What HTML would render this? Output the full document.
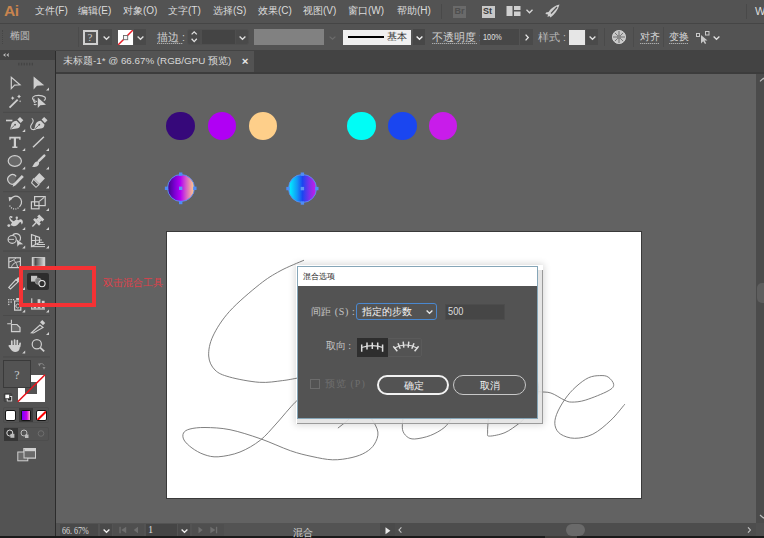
<!DOCTYPE html>
<html><head><meta charset="utf-8">
<style>
*{box-sizing:border-box;margin:0;padding:0}
html,body{width:764px;height:538px;overflow:hidden;background:#535353}
body{position:relative;font-family:"Liberation Sans",sans-serif;color:#d4d4d4;font-size:11px}
.a{position:absolute}
.t{position:absolute;white-space:nowrap;line-height:1}
svg{position:absolute;overflow:visible}
</style></head><body>
<!-- MENU BAR -->
<div class="a" style="left:0;top:0;width:764px;height:23px;background:#535353"></div>
<div class="a" style="left:0;top:22.8px;width:764px;height:1.5px;background:#454545"></div>
<div class="t" style="left:4px;top:2.8px;font-size:15.5px;font-weight:bold;color:#c8844e;letter-spacing:-0.4px">Ai</div>
<div class="t" id="menu" style="left:35px;top:6px;font-size:10px;color:#dcdcdc">
<span class="t" style="left:0">文件(F)</span>
<span class="t" style="left:43px">编辑(E)</span>
<span class="t" style="left:88px">对象(O)</span>
<span class="t" style="left:133px">文字(T)</span>
<span class="t" style="left:178px">选择(S)</span>
<span class="t" style="left:223px">效果(C)</span>
<span class="t" style="left:268px">视图(V)</span>
<span class="t" style="left:313px">窗口(W)</span>
<span class="t" style="left:362px">帮助(H)</span>
</div>
<div class="a" style="left:440.5px;top:4px;width:1px;height:15px;background:#494949"></div>
<div class="a" style="left:453px;top:5.5px;width:13px;height:12px;background:#6a6a6a"></div>
<div class="t" style="left:454.5px;top:7px;font-size:9px;font-weight:bold;color:#4e4e4e">Br</div>
<div class="a" style="left:481.5px;top:5.5px;width:13px;height:12px;background:#c8c8c8"></div>
<div class="t" style="left:483px;top:7px;font-size:9px;font-weight:bold;color:#3a3a3a">St</div>
<svg style="left:506px;top:6px" width="15" height="10"><rect x="0.5" y="0" width="6" height="10" fill="#d0d0d0"/><rect x="8" y="0" width="6.5" height="4" fill="#d0d0d0"/><rect x="8" y="5.5" width="6.5" height="4.5" fill="#d0d0d0"/></svg>
<svg style="left:526px;top:9px" width="7" height="5"><polyline points="0.5,0.8 3.5,3.8 6.5,0.8" fill="none" stroke="#d8d8d8" stroke-width="1.3"/></svg>
<svg style="left:545px;top:4px" width="15" height="14"><path d="M14.5 0.5 C10 1.5 6 4 3.5 8 L1 8.5 L0.5 10 L3 10.5 L2.5 13 L4.5 12 L5.5 13.5 C9.5 10.5 13 6 14.5 0.5 Z" fill="#cfcfcf"/><path d="M6 9.5 L12 3" stroke="#535353" stroke-width="1.2"/></svg>
<div class="a" style="left:745.5px;top:4px;width:1px;height:15px;background:#494949"></div>
<div class="t" style="left:755px;top:6px;font-size:11px;color:#dcdcdc">W</div>

<!-- CONTROL BAR -->
<div class="a" style="left:0;top:24px;width:764px;height:26px;background:#535353"></div>
<div class="a" style="left:0;top:50px;width:764px;height:1px;background:#474747"></div>
<div class="a" style="left:2px;top:30px;width:1px;height:14px;border-left:1px dotted #464646"></div>
<div class="t" style="left:10px;top:31px;font-size:9.5px;color:#bdbdbd">椭圆</div>
<div class="a" style="left:78px;top:27px;width:1.2px;height:19.7px;background:#4b4b4b"></div>
<!-- fill swatch -->
<div class="a" style="left:83px;top:30px;width:15px;height:15px;border:2px solid #d0d0d0;background:#535353"></div>
<div class="t" style="left:87.6px;top:32px;font-size:11px;color:#c8c8c8;font-family:'Liberation Serif',serif">?</div>
<div class="a" style="left:99px;top:29px;width:13px;height:16px;background:#4a4a4a"></div>
<!-- stroke swatch -->
<div class="a" style="left:118px;top:30px;width:15px;height:15px;background:#fff;overflow:hidden">
 <svg width="15" height="15" style="left:0;top:0"><line x1="0" y1="15" x2="15" y2="0" stroke="#e8202a" stroke-width="1.5"/><rect x="5.5" y="5.5" width="4.2" height="4.2" fill="#f4f4f4" stroke="#6a6a6a" stroke-width="0.9"/></svg>
</div>
<div class="a" style="left:133.5px;top:29px;width:12.5px;height:16px;background:#4a4a4a"></div>
<div class="t" style="left:157px;top:32px;font-size:10.5px;color:#d0d0d0">描边 :</div>
<div class="a" style="left:157px;top:42.6px;width:25.5px;height:1px;background:repeating-linear-gradient(90deg,rgba(200,200,200,0.75) 0 1px,rgba(200,200,200,0.25) 1px 2px)"></div>
<div class="a" style="left:186.7px;top:28.8px;width:62.8px;height:16.4px;background:#4a4a4a;border:1px solid #4f4f4f;border-radius:3px"></div>
<div class="a" style="left:201.8px;top:29.8px;width:33px;height:14.4px;background:#444444"></div>
<div class="a" style="left:200.4px;top:29.8px;width:1.4px;height:14.4px;background:#4e4e4e"></div>
<div class="a" style="left:234.8px;top:29.8px;width:1.4px;height:14.4px;background:#4e4e4e"></div>
<!-- profile swatch -->
<div class="a" style="left:254px;top:29px;width:70px;height:16px;background:#818181"></div>
<!-- brush -->
<div class="a" style="left:343px;top:29.5px;width:68px;height:15.5px;background:#f0f0f0"></div>
<div class="a" style="left:347.5px;top:36px;width:36.5px;height:2px;background:#000"></div>
<div class="t" style="left:387px;top:32px;font-size:10px;color:#333">基本</div>
<div class="a" style="left:412.5px;top:29px;width:12px;height:16px;background:#474747"></div>
<!-- opacity -->
<div class="t" style="left:432px;top:32px;font-size:10.5px;color:#d0d0d0">不透明度 :</div>
<div class="a" style="left:432px;top:42.6px;width:44.5px;height:1px;background:repeating-linear-gradient(90deg,rgba(200,200,200,0.75) 0 1px,rgba(200,200,200,0.25) 1px 2px)"></div>
<div class="a" style="left:480px;top:29px;width:39px;height:16px;background:#474747"></div>
<div class="t" style="left:482.7px;top:32.2px;font-size:9.5px;color:#e0e0e0;transform:scaleX(0.77);transform-origin:0 0">100%</div>
<div class="a" style="left:520px;top:29px;width:13px;height:16px;background:#4a4a4a"></div>
<div class="t" style="left:538px;top:32px;font-size:10.5px;color:#bcbcbc">样式 :</div>
<div class="a" style="left:569px;top:29.5px;width:15.5px;height:15.5px;background:#e6e6e6"></div>
<div class="a" style="left:586px;top:29px;width:12px;height:16px;background:#4a4a4a"></div>
<div class="a" style="left:603.5px;top:27.5px;width:1.2px;height:18px;background:#4a4a4a"></div>
<div class="a" style="left:633px;top:27px;width:1.2px;height:19.7px;background:#4b4b4b"></div>
<div class="t" style="left:639.5px;top:32.3px;font-size:9.5px;color:#d8d8d8">对齐</div>
<div class="a" style="left:639.5px;top:42.6px;width:19px;height:1px;background:repeating-linear-gradient(90deg,rgba(200,200,200,0.75) 0 1px,rgba(200,200,200,0.25) 1px 2px)"></div>
<div class="a" style="left:663px;top:27px;width:1.2px;height:19.7px;background:#4b4b4b"></div>
<!-- chevrons -->
<svg style="left:103px;top:35.5px" width="7" height="4"><polyline points="0.6,0.6 3.5,3.3 6.4,0.6" fill="none" stroke="#e0e0e0" stroke-width="1.3"/></svg>
<svg style="left:137px;top:35.5px" width="7" height="4"><polyline points="0.6,0.6 3.5,3.3 6.4,0.6" fill="none" stroke="#e0e0e0" stroke-width="1.3"/></svg>
<svg style="left:239px;top:35.5px" width="7" height="4"><polyline points="0.6,0.6 3.5,3.3 6.4,0.6" fill="none" stroke="#e0e0e0" stroke-width="1.3"/></svg>
<svg style="left:329px;top:35.5px" width="7" height="4"><polyline points="0.6,0.6 3.5,3.3 6.4,0.6" fill="none" stroke="#6c6c6c" stroke-width="1.2"/></svg>
<svg style="left:415.5px;top:35.5px" width="7" height="4"><polyline points="0.6,0.6 3.5,3.3 6.4,0.6" fill="none" stroke="#f0f0f0" stroke-width="1.4"/></svg>
<svg style="left:589px;top:35.5px" width="7" height="4"><polyline points="0.6,0.6 3.5,3.3 6.4,0.6" fill="none" stroke="#e0e0e0" stroke-width="1.3"/></svg>
<svg style="left:713px;top:35.5px" width="7" height="4"><polyline points="0.6,0.6 3.5,3.3 6.4,0.6" fill="none" stroke="#e0e0e0" stroke-width="1.3"/></svg>
<svg style="left:525px;top:33.5px" width="4" height="7"><polyline points="0.6,0.6 3.3,3.5 0.6,6.4" fill="none" stroke="#e8e8e8" stroke-width="1.3"/></svg>
<svg style="left:190.8px;top:31.3px" width="7" height="12"><polyline points="0.6,3.4 3.2,0.8 5.8,3.4" fill="none" stroke="#e0e0e0" stroke-width="1.3"/><polyline points="0.6,7.8 3.2,10.6 5.8,7.8" fill="none" stroke="#e0e0e0" stroke-width="1.3"/></svg>
<!-- recolor globe -->
<svg style="left:611.5px;top:30px" width="14" height="14"><circle cx="7" cy="7" r="6.6" fill="#c8c8c8"/><g stroke="#6a6a6a" stroke-width="0.9"><line x1="7" y1="0.5" x2="7" y2="13.5"/><line x1="0.5" y1="7" x2="13.5" y2="7"/><line x1="2.4" y1="2.4" x2="11.6" y2="11.6"/><line x1="11.6" y1="2.4" x2="2.4" y2="11.6"/></g><circle cx="7" cy="7" r="2.2" fill="#8a8a8a"/><circle cx="7" cy="7" r="6.6" fill="none" stroke="#dcdcdc" stroke-width="0.8"/></svg>
<!-- artboard select icon -->
<svg style="left:696px;top:31px" width="14" height="13"><rect x="0.5" y="2.5" width="3" height="3" fill="none" stroke="#c8c8c8" stroke-width="1"/><rect x="9.5" y="0.5" width="3.5" height="3.5" fill="none" stroke="#c8c8c8" stroke-width="1"/><path d="M5 4 L5 12.5 L7.2 10.3 L9 13 L10.2 12.3 L8.6 9.6 L11.5 9.5 Z" fill="#c8c8c8"/></svg>
<div class="t" style="left:669.3px;top:32.3px;font-size:9.5px;color:#d8d8d8">变换</div>
<div class="a" style="left:669.3px;top:42.6px;width:19px;height:1px;background:repeating-linear-gradient(90deg,rgba(200,200,200,0.75) 0 1px,rgba(200,200,200,0.25) 1px 2px)"></div>

<!-- TOOL PANEL -->
<div class="a" style="left:0;top:50.2px;width:55px;height:9.6px;background:#434343"></div>
<div class="a" style="left:0;top:60px;width:55px;height:476px;background:#535353"></div>
<div class="a" style="left:54.5px;top:51px;width:1.5px;height:485px;background:#2c2c2c"></div>
<svg style="left:0;top:0" width="56" height="538">
<g fill="#cfcfcf" stroke="none">
 <path d="M3 55 L5.8 53 L5.2 55 L5.8 57 Z M6.3 55 L9.1 53 L8.5 55 L9.1 57 Z" fill="#bcbcbc"/>
</g>
<g fill="#444"><rect x="18.2" y="62.8" width="1.3" height="2.6"/><rect x="20.9" y="62.8" width="1.3" height="2.6"/><rect x="23.6" y="62.8" width="1.3" height="2.6"/><rect x="26.3" y="62.8" width="1.3" height="2.6"/><rect x="29" y="62.8" width="1.3" height="2.6"/><rect x="31.7" y="62.8" width="1.3" height="2.6"/></g>
<!-- separators -->
<g fill="#4a4a4a"><rect x="3" y="111.8" width="47" height="1"/><rect x="3" y="191.2" width="47" height="1"/><rect x="3" y="250.6" width="47" height="1"/><rect x="3" y="315" width="47" height="1"/><rect x="3" y="356.4" width="47" height="1"/></g>
<!-- corner triangles -->
<g fill="#cfcfcf">
 <path d="M49 87.5 L49 90.5 L46 90.5 Z"/>
 <path d="M25.2 129 L25.2 132 L22.2 132 Z"/>
 <path d="M25.2 148 L25.2 151 L22.2 151 Z"/><path d="M49 148 L49 151 L46 151 Z"/>
 <path d="M25.2 166.5 L25.2 169.5 L22.2 169.5 Z"/><path d="M49 166.5 L49 169.5 L46 169.5 Z"/>
 <path d="M25.2 185.5 L25.2 188.5 L22.2 188.5 Z"/><path d="M49 185.5 L49 188.5 L46 188.5 Z"/>
 <path d="M25.2 208 L25.2 211 L22.2 211 Z"/><path d="M49 208 L49 211 L46 211 Z"/>
 <path d="M25.2 227 L25.2 230 L22.2 230 Z"/><path d="M49 227 L49 230 L46 230 Z"/>
 <path d="M25.2 245.5 L25.2 248.5 L22.2 248.5 Z"/><path d="M49 245.5 L49 248.5 L46 248.5 Z"/>
 <path d="M25 287 L25 290 L22 290 Z"/>
 <path d="M25.2 309.5 L25.2 312.5 L22.2 312.5 Z"/><path d="M49 309.5 L49 312.5 L46 312.5 Z"/>
 <path d="M49 332 L49 335 L46 335 Z"/>
 <path d="M25.2 350.5 L25.2 353.5 L22.2 353.5 Z"/>
</g>
<g fill="none" stroke="#cfcfcf" stroke-width="1.2" stroke-linejoin="miter">
 <!-- direct select hollow -->
 <path d="M11.3 77.2 L11.3 88.6 L14.6 85.2 L20 84.8 Z"/>
 <!-- line -->
 <path d="M33 147.3 L43.9 136.8" stroke-width="1.5"/>
 <!-- ellipse -->
 <ellipse cx="14.8" cy="161" rx="6.6" ry="5.4" fill="#686868"/>
 <!-- shaper circle -->
 <path d="M14.5 183.8 A4.8 4.8 0 1 1 16.2 176.3" fill="#686868"/>
 <!-- rotate -->
 <path d="M10.6 199.4 A5.8 5.8 0 1 1 20 206"/>
 <path d="M20 206 A5.8 5.8 0 0 1 9.3 204.6" stroke-dasharray="1.1 1.2"/>
 <!-- scale -->
 <rect x="34.6" y="196.6" width="10.6" height="9"/>
 <rect x="31.4" y="201.8" width="7.6" height="7"/>
 <path d="M39.3 201.4 L44.2 197.4"/>
 <!-- shape builder -->
 <ellipse cx="12.2" cy="239.4" rx="4.1" ry="3.9"/>
 <path d="M12.6 235.4 A4.2 4.2 0 1 1 19.6 240.8"/>
 <path d="M8.6 239.4 L14 239.4" stroke-width="0.9"/>
 <!-- perspective -->
 <path d="M31.5 234.5 L31.5 246.5 L39.5 242.5 L39.5 237.5 Z M31.5 240.5 L39.5 240 M35.5 236 L35.5 244.5"/>
 <path d="M39.5 240 L42 240 M39.5 242.4 L43.5 242.4 M37 244.5 L45 244.5 M31.5 246.6 L45 246.6" stroke-width="1"/>
 <!-- mesh -->
 <rect x="8.8" y="257.8" width="11.6" height="9.8"/>
 <path d="M9 262 C12 261 14 260 16 257.8 M11.5 267.5 C12 264 15 262 20.2 261.5 M14 260 C15 262 17 263 17.5 267.5" stroke-width="1"/>
 <!-- gradient -->
 <!-- artboard -->
 <path d="M7.2 323.8 L11 323.8 M11.4 319.8 L11.4 323.8" stroke-width="1.1"/>
 <path d="M11.5 324.5 L17 324.5 L20 327.5 L20 331.6 L11.5 331.6 Z" fill="#6a6a6a"/>
 <!-- zoom -->
 <circle cx="36.8" cy="344.2" r="4.6"/>
 <path d="M40.2 347.6 L44.2 351.4" stroke-width="1.8"/>
 <!-- knife -->
 <path d="M31.5 332.8 L40 325 L43 327.5 L33.5 333 Z"/>
 <!-- eyedropper -->
 <path d="M8.8 287.4 L16 279.5 L18.3 281.6 L10.5 289 Z"/>
 <!-- sprayer doc -->
 <path d="M14.6 301 L20.8 301 L20.8 310.2 L14.6 310.2 Z"/>
 <path d="M19.2 304.5 A2 2 0 1 0 19.2 307.5" stroke-width="1"/>
 <!-- blend circle -->
 <circle cx="42" cy="283.6" r="3.1" stroke="#e0e0e0" fill="#2d2d2d"/>
</g>
<g fill="#cfcfcf" stroke="none">
 <!-- filled arrow -->
 <path d="M33.6 76.4 L33.6 89.4 L37 85.8 L44.2 85.2 Z"/>
 <!-- magic wand -->
 <path d="M8.9 106.9 L17 99 L18.3 100.3 L10.2 108.2 Z"/>
 <path d="M12.6 96.2 L13.4 97.4 L14.6 98.1 L13.4 98.8 L12.6 100 L11.9 98.8 L10.7 98.1 L11.9 97.4 Z"/>
 <path d="M19 94.6 L19.8 95.8 L21 96.5 L19.8 97.2 L19 98.4 L18.3 97.2 L17.1 96.5 L18.3 95.8 Z"/>
 <path d="M20.1 100.3 L20.9 101.3 L20.1 102.3 L19.3 101.3 Z"/>
 <!-- lasso arrow -->
 <path d="M37.8 97.5 L37.8 108 L40.3 105.2 L46 104.8 Z"/>
 <!-- pen -->
 <rect x="6" y="119.7" width="6.4" height="1.6"/>
 <path d="M10 129.6 L11.3 124.6 C11.8 122.6 13.3 121.4 15 121 L16.6 120.7 L20.3 124.4 L20 126 C19.7 127.6 18.4 128.3 16.6 128.6 Z"/>
 <path d="M17.4 119.6 L20 117 L23.3 120.3 L20.7 122.9 Z"/>
 <path d="M34.2 129.6 L35.5 124.6 C36 122.6 37.5 121.4 39.2 121 L40.8 120.7 L44.5 124.4 L44.2 126 C43.9 127.6 42.6 128.3 40.8 128.6 Z"/>
 <path d="M41.6 119.6 L44.2 117 L47.5 120.3 L44.9 122.9 Z"/>
 <path d="M10.4 129.2 L14.6 125.2 M34.6 129.2 L38.8 125.2" stroke="#535353" stroke-width="0.8"/>
 <circle cx="15.1" cy="124.7" r="0.9" fill="#535353"/><circle cx="39.3" cy="124.7" r="0.9" fill="#535353"/>
 <!-- T -->
 <path d="M9.3 136.8 L20.6 136.8 L20.6 139.8 L19.2 139.8 L19.2 138.4 L16 138.4 L16 146.6 L17.4 146.6 L17.4 148 L12.3 148 L12.3 146.6 L13.8 146.6 L13.8 138.4 L10.7 138.4 L10.7 139.8 L9.3 139.8 Z"/>
 <!-- brush -->
 <path d="M44.3 155.6 L38.9 160.8" stroke="#cfcfcf" stroke-width="2.5" stroke-linecap="round"/>
 <path d="M38.6 161.4 C39.6 162.6 39.2 164.6 37.5 165.9 C36 167 33.6 167.1 31.9 166.8 C33.2 165.8 33.5 164.2 34.6 162.9 C35.6 161.7 37.4 160.7 38.6 161.4 Z"/>
 <!-- shaper pencil -->
 <path d="M21.8 175 L23.8 177 L15.4 185.4 L12.6 186.8 L13.6 183.6 Z"/>
 <!-- eraser -->
 <path d="M39.3 173 L44.9 178.6 L39.6 184 L34 178.4 Z"/>
 <path d="M33.4 179 L39 184.6 L36 187.3 L31.6 183 Z" fill="none" stroke="#cfcfcf" stroke-width="1.1"/>
 <!-- rotate arrowhead -->
 <path d="M8.6 197 L12.9 197.6 L9.3 201.4 Z"/>
 <!-- shape builder arrow -->
 <path d="M16.9 239.5 L17.4 246.8 L19.2 244.6 L23.2 244.3 Z"/>
 <!-- pin -->
 <g transform="translate(-1 1) rotate(45 38.2 220.6)"><rect x="34.6" y="214.2" width="7.2" height="2.8"/><path d="M36.2 216.8 L40.2 216.8 L40.8 219.8 L35.6 219.8 Z"/><rect x="34" y="219.6" width="8.4" height="2.6"/><rect x="37.5" y="222" width="1.4" height="5.4"/></g>
 <!-- warp -->
 <path d="M9.2 217.6 C9.4 215.8 11.4 215.4 12.4 216.6 C12.8 217.2 12.4 218 11.6 218 C11 218 10.8 217.4 11 217 C10.4 217.2 10.2 218.2 10.8 219 C11.8 220.2 12.4 220.6 13.8 221.2 L16.8 219 L18.2 220.2 C19.5 219.8 20.4 219.2 21 219.3 C22.4 219.5 23 221 22.8 222.6 C22.6 223.6 22 224.4 21.6 224.6 C21.4 223.4 21 222 20.4 222 C19.6 222 19 223.8 17 225.2 C15.2 226.4 13 226.4 11.8 225.6 L10.4 225.2 C11 224 11.6 223.2 12 222.4 C10.4 221.4 9 219.6 9.2 217.6 Z"/>
 <circle cx="16.8" cy="217.7" r="1.2"/>
 <circle cx="8.8" cy="225.6" r="1.4"/>
 <!-- symbol sprayer dots -->
 <rect x="8.1" y="299" width="1.3" height="1.3"/><rect x="10.5" y="299" width="1.3" height="1.3"/><rect x="12.9" y="299" width="1.3" height="1.3"/>
 <rect x="8.1" y="301.4" width="1.3" height="1.3"/><rect x="10.5" y="301.4" width="1.3" height="1.3"/>
 <rect x="8.1" y="303.8" width="1.3" height="1.3"/>
 <rect x="16.2" y="298" width="3" height="2"/>
 <!-- column graph -->
 <rect x="31.2" y="298.3" width="1.1" height="11"/>
 <rect x="31.2" y="308.4" width="13.8" height="1.2"/>
 <rect x="33.6" y="304.6" width="2.6" height="3.8"/><rect x="37.6" y="299.2" width="2.8" height="9.2"/><rect x="41.8" y="300.8" width="2.8" height="7.6"/>
 <!-- slice cap -->
 <path d="M40 322.3 L42.3 320 L45.2 322.9 L43 325.2 Z"/>
 <!-- hand -->
 <path d="M10.6 345 L20 345 L19.6 348.8 C19 351 17.4 352 15.2 352 C13.2 352 11.9 351 10.9 349.6 L8.7 346.4 C8.2 345.5 8.9 344.6 9.8 345.1 Z"/>
 <path d="M11.8 346 L11.8 341.2 M14.6 346 L14.6 340 M17.3 346 L17.3 340.5 M19.6 346.5 L20.1 343.4" stroke="#cfcfcf" stroke-width="1.7" stroke-linecap="round"/>
 <!-- eyedropper tip -->
 <path d="M15.6 279.9 L18.2 276.9 L20 278.7 L17.9 282 Z"/>
 <!-- blend -->
 <rect x="31" y="275.8" width="6.2" height="5.8" fill="#c8c8c8"/>
</g>
<!-- lasso loop + curvature squiggle -->
<g fill="none" stroke="#cfcfcf" stroke-width="1.1">
 <path d="M37 101.5 C33 101 31.8 98.8 33 97 C35 94.8 42 94.8 44.8 97 C46 98.2 45.5 99.8 43.8 100.6"/>
 <path d="M34.3 98.6 C33.3 100 33.5 102.5 35.5 102.8 M34 104 C34.5 105 36 105 36.2 104"/>
 <path d="M31.8 118.4 C33.5 119.5 33.6 121.5 32.2 123.3 C30.5 125.5 30.3 128 31.8 129.2 C33 129.8 34.5 129.6 35.5 129"/>
</g>
<defs>
 <linearGradient id="tg" x1="0" x2="1"><stop offset="0" stop-color="#e6e6e6"/><stop offset="0.25" stop-color="#4a4a4a"/><stop offset="1" stop-color="#e0e0e0"/></linearGradient>
 <radialGradient id="bc"><stop offset="0" stop-color="#8a8a8a"/><stop offset="1" stop-color="#6a6a6a"/></radialGradient>
</defs>
<rect x="32.2" y="257.6" width="12.6" height="8.6" fill="url(#tg)" stroke="#d8d8d8" stroke-width="0.8"/>
</svg>
<!-- fill / stroke -->
<div class="a" style="left:17.6px;top:374.5px;width:27.6px;height:27.5px;background:#fff"></div>
<div class="a" style="left:25.2px;top:382.2px;width:12.2px;height:12px;background:#535353"></div>
<svg style="left:0;top:0" width="56" height="538"><line x1="17.8" y1="401.8" x2="45" y2="374.7" stroke="#e8141c" stroke-width="1.6"/></svg>
<div class="a" style="left:3.2px;top:360px;width:27.8px;height:28.3px;background:#535353;border:1px solid #3a3a3a"></div>
<div class="t" style="left:14.2px;top:368.5px;font-size:12px;color:#c8ccd0;font-family:'Liberation Serif',serif">?</div>
<svg style="left:0;top:0" width="56" height="538">
 <path d="M39 365 C40 363 43 363 44 365.5" fill="none" stroke="#8a8a8a" stroke-width="1"/>
 <path d="M38 363.5 L39.5 366.5 L40.8 363.5 Z M42.5 367 L44 369.8 L45.5 367 Z" fill="#8a8a8a"/>
 <rect x="4.2" y="393.5" width="7.5" height="8" rx="1" fill="#4a4a4a" stroke="#3e3e3e" stroke-width="0.8"/>
 <rect x="7.2" y="396.5" width="4.5" height="4.5" fill="#2a2a2a" stroke="#e0e0e0" stroke-width="0.9"/>
 <rect x="5" y="394.2" width="4.5" height="4.5" fill="#fff" stroke="#2a2a2a" stroke-width="0.6"/>
</svg>
<!-- color mode row -->
<div class="a" style="left:3.3px;top:407.3px;width:45.7px;height:16px;border:1px solid #4d4d4d;border-radius:2px"></div>
<div class="a" style="left:19px;top:408.4px;width:14px;height:14px;background:#3a3a3a"></div>
<div class="a" style="left:5px;top:410px;width:10.6px;height:10.6px;background:#fff;border:1.5px solid #141414;border-radius:2px"></div>
<div class="a" style="left:21.2px;top:410.4px;width:9.6px;height:10.4px;background:linear-gradient(90deg,#7a00ff,#c800e8 60%,#ffb0c8);border:1.5px solid #141414;border-radius:1.5px"></div>
<div class="a" style="left:36.3px;top:410px;width:10.6px;height:10.6px;background:#fff;border:1.5px solid #141414;border-radius:2px;overflow:hidden"><svg width="11" height="11" style="left:0;top:0"><line x1="0" y1="9.5" x2="9.5" y2="0" stroke="#ff0000" stroke-width="2"/></svg></div>
<!-- drawing mode row -->
<div class="a" style="left:3.9px;top:427.3px;width:45px;height:13.5px;border:1px solid #4d4d4d;border-radius:2px"></div>
<div class="a" style="left:4.2px;top:428px;width:13.4px;height:12.7px;background:#363636"></div>
<svg style="left:0;top:0" width="56" height="538">
 <circle cx="9.8" cy="433" r="3" fill="none" stroke="#d8d8d8" stroke-width="1"/>
 <rect x="10.4" y="433.8" width="4" height="4" fill="#bcbcbc"/>
 <circle cx="24" cy="433" r="3" fill="none" stroke="#bcbcbc" stroke-width="1"/>
 <rect x="25" y="434.5" width="3.5" height="3.5" fill="#bcbcbc"/>
 <circle cx="41" cy="433.5" r="2.8" fill="none" stroke="#707070" stroke-width="0.9"/>
 <!-- screen mode -->
 <rect x="24" y="448.5" width="11.5" height="9.5" fill="#6a6a6a" stroke="#d0d0d0" stroke-width="1"/>
 <rect x="17.8" y="452" width="10" height="8.8" fill="#6a6a6a" stroke="#d0d0d0" stroke-width="1"/>
 <rect x="24" y="448.5" width="11.5" height="9.5" fill="#6a6a6a" stroke="#d0d0d0" stroke-width="1"/>
 <rect x="24.5" y="449" width="10.5" height="2.2" fill="#d0d0d0"/>
</svg>
<!-- blend highlight -->
<div class="a" style="left:27.3px;top:272.9px;width:21.3px;height:16.8px;background:#2d2d2d;border-radius:2px"></div>
<svg style="left:0;top:0" width="56" height="538">
 <rect x="31" y="275.8" width="6.2" height="5.8" fill="#c4c4c4"/>
 <circle cx="38.2" cy="281.2" r="3.1" fill="#7c7c7c" stroke="#9a9a9a" stroke-width="0.8"/>
 <circle cx="42" cy="283.6" r="3.1" stroke="#e6e6e6" stroke-width="1.1" fill="#2d2d2d"/>
</svg>

<!-- TAB BAR -->
<div class="a" style="left:56px;top:50.2px;width:708px;height:22px;background:#434343"></div>
<div class="a" style="left:56px;top:50.8px;width:198.3px;height:21.2px;background:#535353"></div>
<div class="a" style="left:56px;top:72px;width:708px;height:1.8px;background:#3c3c3c"></div>
<div class="t" style="left:63px;top:56.3px;font-size:9.8px;color:#d8d8d8">未标题-1* @ 66.67% (RGB/GPU 预览)</div>
<div class="t" style="left:241.8px;top:56px;font-size:11.5px;font-weight:bold;color:#e8e8e8">×</div>

<!-- CANVAS -->
<div class="a" style="left:56px;top:73.8px;width:700px;height:449.2px;background:#626262"></div>
<div class="a" style="left:756.4px;top:73.8px;width:7.6px;height:449.2px;background:#4b4b4b"></div>

<!-- STATUS BAR -->
<div class="a" style="left:56px;top:523px;width:708px;height:13px;background:#535353"></div>
<div class="a" style="left:0;top:535.8px;width:764px;height:2.2px;background:#1a1a1a"></div>
<div class="a" style="left:544.7px;top:536px;width:32.3px;height:2px;background:#3c3a38"></div>
<div class="a" style="left:59.9px;top:524px;width:37.7px;height:12px;background:#494949"></div>
<div class="t" style="left:61.5px;top:525.6px;font-size:10px;color:#dcdcdc;font-family:'Liberation Serif',serif;transform:scaleX(0.8);transform-origin:0 0">66. 67%</div>
<div class="a" style="left:99.7px;top:524px;width:12.6px;height:12px;background:#494949"></div>
<svg style="left:103px;top:528.5px" width="7" height="4"><polyline points="0.6,0.6 3.5,3.3 6.4,0.6" fill="none" stroke="#f0f0f0" stroke-width="1.3"/></svg>
<div class="a" style="left:113px;top:524px;width:31px;height:12px;background:#4f4f4f"></div>
<div class="a" style="left:145.7px;top:524px;width:31.5px;height:12px;background:#454545"></div>
<div class="t" style="left:148.3px;top:526px;font-size:9.5px;color:#e0e0e0;font-family:'Liberation Serif',serif">1</div>
<div class="a" style="left:178px;top:524px;width:12px;height:12px;background:#494949"></div>
<svg style="left:181px;top:528.5px" width="7" height="4"><polyline points="0.6,0.6 3.5,3.3 6.4,0.6" fill="none" stroke="#f0f0f0" stroke-width="1.3"/></svg>
<div class="a" style="left:192px;top:524px;width:32px;height:12px;background:#4f4f4f"></div>
<svg style="left:0;top:0" width="764" height="538"><g fill="#6e6e6e">
<rect x="119.4" y="526.8" width="1.3" height="6.5"/><path d="M126.2 526.8 L126.2 533.3 L121.3 530 Z"/>
<path d="M138 526.8 L138 533.3 L133.8 530 Z"/>
<path d="M198.5 526.8 L198.5 533.3 L202.7 530 Z"/>
<path d="M210.4 526.8 L210.4 533.3 L215.3 530 Z"/><rect x="215.9" y="526.8" width="1.3" height="6.5"/>
</g></svg>
<div class="t" style="left:292.6px;top:527.6px;font-size:9.5px;color:#cfcfcf">混合</div>
<div class="a" style="left:380px;top:523px;width:14.7px;height:13px;background:#4a4a4a"></div>
<svg style="left:0;top:0" width="764" height="538"><path d="M385.5 527.2 L385.5 534.2 L390.4 530.7 Z" fill="#e8e8e8"/>
</svg>
<div class="a" style="left:394.7px;top:523px;width:361.3px;height:13px;background:#4d4d4d"></div>
<div class="a" style="left:756px;top:523px;width:8px;height:13px;background:#505050"></div>
<div class="a" style="left:565.8px;top:524.2px;width:19.7px;height:11.6px;background:#6a6a6a;border-radius:6px"></div>
<svg style="left:0;top:0" width="764" height="538">
<polyline points="401.4,527.4 399,530 401.4,532.6" fill="none" stroke="#c8c8c8" stroke-width="1.1"/>
<polyline points="748,527.4 750.4,530 748,532.6" fill="none" stroke="#c8c8c8" stroke-width="1.1"/>
</svg>
<div class="a" style="left:757px;top:283.4px;width:7px;height:19.6px;background:#5e5e5e;border-radius:5px 0 0 5px"></div>
<svg style="left:0;top:0" width="764" height="538">
<polyline points="760,81.4 763.4,78.4 766.8,81.4" fill="none" stroke="#bdbdbd" stroke-width="1.2"/>
<polyline points="760,515 763.4,518 766.8,515" fill="none" stroke="#bdbdbd" stroke-width="1.2"/>
</svg>

<!-- ARTBOARD -->
<div class="a" style="left:166px;top:231px;width:476px;height:268px;background:#fff;border:1px solid #3a3a3a"></div>

<!-- STROKES -->
<svg style="left:0;top:0" width="764" height="538">
<g fill="none" stroke="#727272" stroke-width="0.9">
<path d="M304.0 260.2 C300.0 262.0 287.4 266.9 280.0 271.0 C272.6 275.1 267.7 277.9 259.3 284.6 C250.9 291.3 237.2 302.8 229.5 311.4 C221.8 320.0 216.5 328.6 213.0 336.0 C209.5 343.4 208.4 350.3 208.7 356.0 C209.0 361.7 211.5 366.5 215.0 370.0 C218.5 373.5 222.1 374.9 229.5 377.0 C236.9 379.1 250.5 381.7 259.3 382.3 C268.1 382.9 275.7 381.4 282.5 380.6 C289.3 379.8 292.1 379.0 300.0 377.6 C307.9 376.2 325.0 372.9 330.0 372.0"/>
<path d="M310.0 390.0 C307.9 391.7 301.0 396.9 297.5 400.1 C294.0 403.3 292.6 405.0 289.0 409.0 C285.4 413.0 280.8 418.8 276.0 424.0 C271.2 429.2 266.3 435.5 260.3 440.2 C254.3 444.9 247.0 449.2 240.0 452.0 C233.0 454.8 224.2 456.4 218.2 456.8 C212.2 457.2 208.4 456.0 204.0 454.5 C199.6 453.0 195.3 450.4 192.0 448.0 C188.7 445.6 185.4 442.5 184.0 440.0 C182.6 437.5 182.5 434.8 183.5 433.0 C184.5 431.2 186.4 429.9 190.0 429.0 C193.6 428.1 198.3 427.4 205.0 427.5 C211.7 427.6 220.8 427.8 230.0 429.7 C239.2 431.6 250.2 435.2 260.3 438.7 C270.4 442.2 281.8 447.7 290.4 450.7 C299.0 453.7 305.0 455.0 312.0 456.5 C319.0 458.0 325.9 459.6 332.6 459.8 C339.3 460.0 346.5 458.8 352.0 457.5 C357.5 456.2 361.9 454.6 365.7 452.3 C369.4 450.1 372.5 447.4 374.5 444.0 C376.5 440.6 378.5 436.3 377.9 432.0 C377.3 427.7 374.0 422.5 371.0 418.0 C368.0 413.5 361.8 407.2 360.0 405.0"/>
<path d="M337.9 428.1 C339.7 426.6 345.8 422.3 348.7 419.3 C351.6 416.3 353.9 411.6 355.0 410.0"/>
<path d="M403.5 410.0 C403.4 411.5 403.1 415.5 402.9 418.8 C402.7 422.1 401.9 426.7 402.5 429.6 C403.1 432.6 404.8 434.9 406.8 436.5 C408.8 438.1 410.7 439.2 414.6 439.0 C418.5 438.8 425.4 437.4 430.3 435.5 C435.2 433.6 440.7 430.5 444.1 427.7 C447.6 424.9 449.2 421.8 451.0 418.8 C452.8 415.9 454.3 411.5 455.0 410.0"/>
<path d="M489.0 408.0 C488.9 409.8 488.5 414.8 488.3 418.8 C488.1 422.8 487.4 429.1 487.6 432.0 C487.8 434.9 486.4 436.0 489.3 436.1 C492.2 436.2 500.1 434.7 505.0 432.6 C509.9 430.5 515.4 426.1 518.7 423.7 C522.0 421.2 522.7 420.2 524.6 417.9 C526.5 415.6 529.1 411.3 530.0 410.0"/>
<path d="M520.0 388.0 C523.1 388.6 533.2 390.8 538.4 391.6 C543.5 392.4 546.6 391.6 550.9 393.0 C555.2 394.4 560.7 398.5 564.2 400.0 C567.7 401.5 568.2 402.1 571.8 402.1 C575.4 402.1 579.8 401.9 585.8 400.0 C591.8 398.1 603.5 393.5 608.1 390.9 C612.8 388.3 613.7 386.9 613.7 384.6 C613.7 382.3 610.4 378.5 608.1 377.0 C605.8 375.5 603.0 375.5 599.7 375.6 C596.5 375.7 592.6 375.9 588.6 377.7 C584.6 379.5 580.0 383.1 576.0 386.7 C572.0 390.3 568.1 394.6 564.9 399.3 C561.6 404.0 558.1 410.2 556.5 414.6 C554.9 419.0 554.4 422.5 555.1 425.8 C555.8 429.1 557.5 432.1 560.7 434.2 C564.0 436.3 569.2 438.3 574.6 438.3 C580.0 438.3 586.8 437.2 592.8 434.2 C598.8 431.2 605.6 425.2 610.9 420.2 C616.2 415.2 622.5 406.9 624.8 404.2"/>
<path d="M537 380 C539 384 539 392 537 397"/>
</g>
</svg>

<!-- DIALOG -->
<div class="a" style="left:296px;top:265px;width:247px;height:159px;box-shadow:0 0 7px 1px rgba(0,0,0,0.16)"></div>
<div class="a" style="left:297px;top:270px;width:246px;height:154px;background:rgba(226,226,226,0.9);border-right:1px solid #9a9a9a;border-bottom:1px solid #9a9a9a"></div>
<div class="a" style="left:297px;top:266px;width:241px;height:153px;background:#535353;border:1px solid #86a6b8"></div>
<div class="a" style="left:298px;top:267px;width:239px;height:19.3px;background:#fff"></div>
<div class="t" style="left:302.6px;top:272.6px;font-size:8px;color:#1e1e1e">混合选项</div>
<div class="t" style="left:310.5px;top:307px;font-size:10px;color:#c4c4c4;font-family:'Liberation Serif',serif;letter-spacing:0.6px">间距 (S) :</div>
<div class="a" style="left:356px;top:303.4px;width:80.8px;height:16.4px;border:1.7px solid #4a88d0;border-radius:3px;background:#535353"></div>
<div class="t" style="left:361.5px;top:307px;font-size:10.2px;color:#f4f4f4;font-weight:500">指定的步数</div>
<svg style="left:425.5px;top:309.5px" width="7" height="4"><polyline points="0.6,0.6 3.5,3.3 6.4,0.6" fill="none" stroke="#e8e8e8" stroke-width="1.3"/></svg>
<div class="a" style="left:445px;top:304.2px;width:59.5px;height:15.4px;background:#464646;border:1px solid #4c4c4c"></div>
<div class="t" style="left:447.5px;top:305.8px;font-size:11px;color:#dcdcdc;transform:scaleX(0.84);transform-origin:0 0">500</div>
<div class="t" style="left:325.7px;top:340.5px;font-size:10px;color:#c4c4c4;font-family:'Liberation Serif',serif">取向 :</div>
<div class="a" style="left:356.8px;top:337.8px;width:65px;height:19px;border:1px solid #5a5a5a;border-radius:2px;background:#535353"></div>
<div class="a" style="left:356.8px;top:337.8px;width:31.5px;height:19px;background:#2e2e2e"></div>
<svg style="left:0;top:0" width="764" height="538">
<g stroke="#dedede" fill="none" stroke-width="1.5">
 <path d="M361.7 347.4 Q372.3 343.8 383 347.4" stroke-width="1.1"/>
 <path d="M361.7 344.6 L361.7 351.8 M367 342.6 L367 349.4 M372.3 342.4 L372.3 349 M377.7 342.6 L377.7 349.4 M382.6 344.6 L382.6 351.8"/>
 <path d="M394 348.3 Q405.8 341.6 417.6 348.3" stroke-width="1.1"/>
 <path d="M393.3 346.2 L397.3 351.2 M398 343.2 L400.2 348.8 M403.2 341.6 L403.8 347.6 M408.8 341.6 L408.2 347.6 M414 343.2 L411.8 348.8 M418.6 346.2 L414.6 351.2"/>
</g>
</svg>
<div class="a" style="left:310.3px;top:379.4px;width:9.6px;height:9.6px;border:1px solid #6c6c6c"></div>
<div class="t" style="left:325px;top:379px;font-size:10px;color:#6e6e6e;font-family:'Liberation Serif',serif;letter-spacing:1px">预览 (P)</div>
<div class="a" style="left:377.2px;top:374.6px;width:72.3px;height:20.1px;border:2px solid #f2f2f2;border-radius:10px"></div>
<div class="t" style="left:404px;top:380.5px;font-size:10px;color:#f0f0f0">确定</div>
<div class="a" style="left:453.3px;top:374.6px;width:72.7px;height:20.1px;border:1.6px solid #c8c8c8;border-radius:10px"></div>
<div class="t" style="left:479.5px;top:380.5px;font-size:10px;color:#f0f0f0">取消</div>

<!-- RED ANNOTATION -->
<div class="a" style="left:19px;top:266px;width:77px;height:40.5px;border:4.2px solid #f53234"></div>
<div class="t" style="left:102.7px;top:278px;font-size:10.3px;color:#e0404a">双击混合工具</div>

<!-- CIRCLES -->
<div class="a" style="left:166.3px;top:111.6px;width:28.7px;height:28.7px;border-radius:50%;background:#36087a"></div>
<div class="a" style="left:207.5px;top:111.6px;width:28.7px;height:28.7px;border-radius:50%;background:#b000f4"></div>
<div class="a" style="left:248.5px;top:111.6px;width:28.7px;height:28.7px;border-radius:50%;background:#fecf8a"></div>
<div class="a" style="left:347.1px;top:111.6px;width:28.7px;height:28.7px;border-radius:50%;background:#00fdf6"></div>
<div class="a" style="left:387.9px;top:111.6px;width:28.7px;height:28.7px;border-radius:50%;background:#1a46f0"></div>
<div class="a" style="left:428.8px;top:111.6px;width:28.7px;height:28.7px;border-radius:50%;background:#c81cea"></div>
<div class="a" style="left:166.6px;top:174.2px;width:28.2px;height:28.2px;border-radius:50%;background:linear-gradient(90deg,#40068a 0%,#7a00d2 25%,#b400f4 48%,#d45ec8 70%,#ffcf8a 100%);border:1px solid #5a8cf0"></div>
<div class="a" style="left:288px;top:174.2px;width:28.8px;height:28.8px;border-radius:50%;background:linear-gradient(90deg,#00f6ff 0%,#1298f6 30%,#1a46f0 50%,#7a30ec 75%,#cc1ae8 100%);border:1px solid #5a8cf0"></div>
<svg style="left:0;top:0" width="764" height="538">
<g fill="#4f8cf5">
 <rect x="179" y="172.5" width="3.4" height="3.4"/><rect x="179" y="200.8" width="3.4" height="3.4"/>
 <rect x="164.9" y="186.6" width="3.4" height="3.4"/><rect x="193.1" y="186.6" width="3.4" height="3.4"/>
 <rect x="179" y="186.6" width="3.4" height="3.4" fill="#5d95f6"/>
 <rect x="300.7" y="172.5" width="3.4" height="3.4"/><rect x="300.7" y="201.3" width="3.4" height="3.4"/>
 <rect x="286.3" y="186.9" width="3.4" height="3.4"/><rect x="315.1" y="186.9" width="3.4" height="3.4"/>
 <rect x="300.7" y="186.9" width="3.4" height="3.4" fill="#5d95f6"/>
</g>
</svg>

</body></html>
